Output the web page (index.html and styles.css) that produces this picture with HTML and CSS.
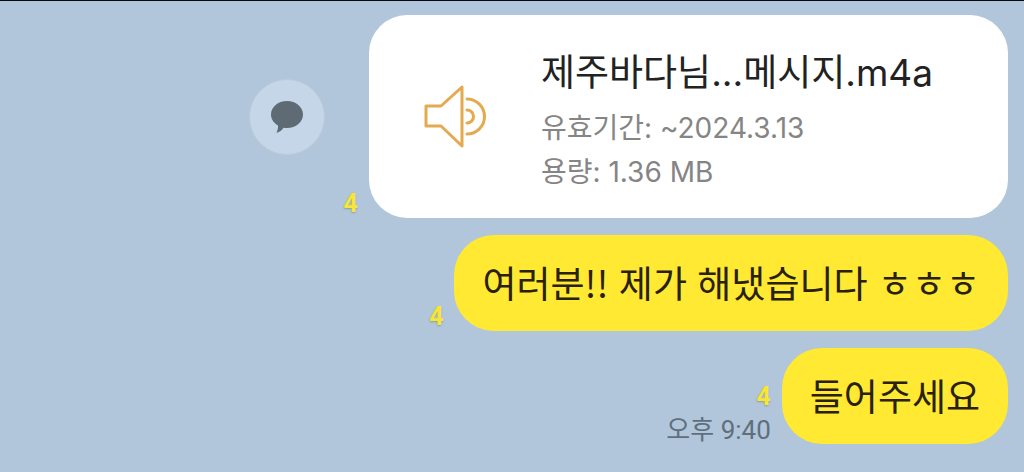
FILE: index.html
```html
<!DOCTYPE html>
<html lang="ko">
<head>
    <meta charset="UTF-8">
    <meta name="viewport" content="width=device-width, initial-scale=1.0">
    <title>채팅방</title>
    <link rel="stylesheet" href="styles.css">
</head>
<body>
    <main class="chat">
        <!-- 파일 메시지 -->
        <div class="row">
            <button type="button" class="share-btn" aria-label="공유">
                <svg class="share-icon" viewBox="0 0 34 34">
                    <path d="M17 1C8 1 1 6.900 1 14.500c0 4.500 2.500 8.500 7 11 .3 2-.3 4.500-1.500 7.500 3-1 5.500-2.800 7-5.200 1.200.2 2.300.2 3.500.2 9 0 16-6 16-13.500S26 1 17 1z"/>
                </svg>
            </button>
            <div class="meta">
                <span class="unread">4</span>
            </div>
            <a href="#" class="file-card">
                <svg class="file-icon" viewBox="0 0 64 64">
                    <path d="M3 22h15L39 3v59L18 42H3z"/>
                    <path d="M44 15a17.500 17.500 0 0 1 0 35"/>
                    <path d="M44 26a6.500 6.500 0 0 1 0 13"/>
                </svg>
                <span class="file-info">
                    <span class="file-name">제주바다님...메시지.m4a</span>
                    <span class="file-detail">유효기간: ~2024.3.13</span>
                    <span class="file-detail">용량: 1.36 MB</span>
                </span>
            </a>
        </div>

        <div class="row">
            <div class="meta">
                <span class="unread">4</span>
            </div>
            <p class="bubble">여러분!! 제가 해냈습니다 ㅎㅎㅎ</p>
        </div>

        <div class="row">
            <div class="meta">
                <span class="unread">4</span>
                <time class="time" datetime="21:40">오후 9:40</time>
            </div>
            <p class="bubble">들어주세요</p>
        </div>
    </main>
</body>
</html>
```
FILE: styles.css
```css
* {
    box-sizing: border-box;
}
body {
    margin: 0;
    min-height: 100vh;
    background: #b1c6da;
    border-top: 1px solid #05050f;
    font-family: "Noto Sans CJK KR", sans-serif;
}
.chat {
    display: flex;
    flex-direction: column;
    gap: 17px;
    padding: 14px 16px 28px;
}
.row {
    display: flex;
    justify-content: flex-end;
    align-items: flex-end;
    gap: 11px;
}
/* 공유 버튼 */
.share-btn {
    display: flex;
    align-items: center;
    justify-content: center;
    align-self: center;
    width: 76px;
    height: 76px;
    margin-right: 8px;
    padding: 0;
    border: 1px solid #bccbd8;
    border-radius: 50%;
    background: #c4d6e8;
    cursor: pointer;
}
.share-icon {
    width: 34px;
    height: 34px;
    fill: #5f6b74;
}
/* 안 읽은 수, 시간 */
.meta {
    display: flex;
    flex-direction: column;
    align-items: flex-end;
    gap: 5px;
}
.unread {
    font-family: Roboto, sans-serif;
    font-size: 25px;
    font-weight: 700;
    line-height: 28px;
    color: #f9e535;
    text-shadow: 0 1px 2px rgba(90, 100, 60, 0.4);
}
.time {
    font-family: Roboto, "Noto Sans CJK KR", sans-serif;
    font-size: 26px;
    line-height: 28px;
    color: #5f6f7e;
}
/* 파일 카드 */
.file-card {
    display: flex;
    align-items: flex-start;
    gap: 54px;
    padding: 33px 75px 24px 54px;
    border-radius: 38px;
    background: #fff;
    font-family: Inter, "Noto Sans CJK KR", sans-serif;
    text-decoration: none;
}
.file-icon {
    width: 64px;
    height: 64px;
    margin-top: 36px;
    fill: none;
    stroke: #e3aa50;
    stroke-width: 3;
    stroke-linecap: round;
    stroke-linejoin: round;
}
.file-info {
    display: flex;
    flex-direction: column;
}
.file-name {
    margin-bottom: 8px;
    font-size: 37px;
    line-height: 50px;
    color: #222;
}
.file-detail {
    font-size: 28px;
    line-height: 44px;
    color: #858585;
}
/* 말풍선 */
.bubble {
    margin: 0;
    padding: 20px 28px 22px;
    border-radius: 40px;
    background: #ffe933;
    color: #29210c;
    font-size: 37px;
    line-height: 54px;
}
```
